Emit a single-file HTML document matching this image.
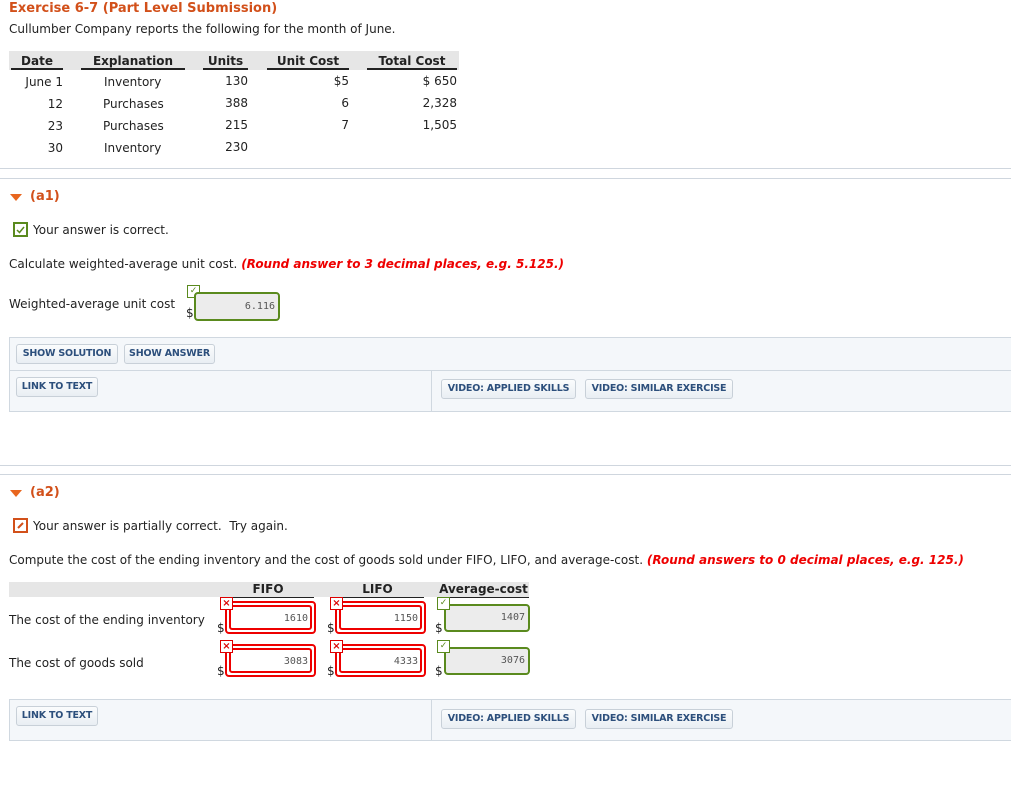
<!DOCTYPE html>
<html><head><meta charset="utf-8"><style>
*{margin:0;padding:0;box-sizing:border-box}
body{width:1011px;height:786px;background:#fff;font-family:"DejaVu Sans","Liberation Sans",sans-serif;font-size:12px;color:#222;position:relative;overflow:hidden}
.a{position:absolute;white-space:nowrap;line-height:14px}
.or{color:#d2501a;font-weight:bold}
.hr{position:absolute;left:0;width:1011px;height:1px;background:#cfd6de}
.th{position:absolute;font-weight:bold;text-align:center;border-bottom:2px solid #222;line-height:15px;height:17px}
.r{text-align:right}
.btn{position:absolute;height:20px;border:1px solid #c8d0d8;border-radius:3px;background:linear-gradient(#fbfcfd,#e9eef3);font-size:9.5px;font-weight:bold;color:#2c4f7c;line-height:18px;text-align:center;white-space:nowrap;overflow:hidden;letter-spacing:-0.2px}
.panel{position:absolute;left:9px;width:1002px;background:#f4f7fa;border:1px solid #d0d8e0;border-right:none}
.chk{position:absolute;width:15px;height:15px;border:2px solid #5a8a1e;background:#fff}
.sm{position:absolute;width:13px;height:13px;border:1px solid #5a8a1e;background:#fff;font-size:9px;color:#5a8a1e;text-align:center;line-height:11px}
.smx{position:absolute;width:13px;height:13px;border:1px solid #d00;background:#fff;font-size:10px;color:#d00;text-align:center;line-height:11px;font-weight:bold}
.gin{position:absolute;border:2px solid #5a8a1e;border-radius:4px;background:#ececec;font-size:10px;color:#555;text-align:right;padding-right:3px;font-family:"DejaVu Sans Mono","Liberation Mono",monospace}
.rin{position:absolute;border:2px solid #e00;border-radius:4px;background:#fff;padding:2px}
.rin div{width:100%;height:100%;border:2px solid #e00;border-radius:3px;background:#fff;font-size:10px;color:#555;text-align:right;padding-right:2px;font-family:"DejaVu Sans Mono","Liberation Mono",monospace;line-height:23px}
.d{position:absolute;font-size:12px}
.tri{position:absolute;width:0;height:0;border-left:6px solid transparent;border-right:6px solid transparent;border-top:7px solid #e8661f}
</style></head><body>
<div class="a or" style="left:9px;top:2px;font-size:13px">Exercise 6-7 (Part Level Submission)</div>
<div class="a" style="left:9px;top:22px">Cullumber Company reports the following for the month of June.</div>

<div style="position:absolute;left:9px;top:51px;width:450px;height:19px;background:#e6e6e6"></div>
<div class="th" style="left:11px;top:53px;width:52px;line-height:17px">Date</div>
<div class="th" style="left:81px;top:53px;width:104px;line-height:17px">Explanation</div>
<div class="th" style="left:203px;top:53px;width:45px;line-height:17px">Units</div>
<div class="th" style="left:267px;top:53px;width:82px;line-height:17px">Unit Cost</div>
<div class="th" style="left:367px;top:53px;width:90px;line-height:17px">Total Cost</div>
<div class="a r" style="left:11px;top:75px;width:52px">June 1</div>
<div class="a" style="left:104px;top:75px">Inventory</div>
<div class="a r" style="left:200px;top:74px;width:48px">130</div>
<div class="a r" style="left:300px;top:74px;width:49px">$5</div>
<div class="a r" style="left:400px;top:74px;width:57px">$ 650</div>
<div class="a r" style="left:11px;top:97px;width:52px">12</div>
<div class="a" style="left:103px;top:97px">Purchases</div>
<div class="a r" style="left:200px;top:96px;width:48px">388</div>
<div class="a r" style="left:300px;top:96px;width:49px">6</div>
<div class="a r" style="left:400px;top:96px;width:57px">2,328</div>
<div class="a r" style="left:11px;top:119px;width:52px">23</div>
<div class="a" style="left:103px;top:119px">Purchases</div>
<div class="a r" style="left:200px;top:118px;width:48px">215</div>
<div class="a r" style="left:300px;top:118px;width:49px">7</div>
<div class="a r" style="left:400px;top:118px;width:57px">1,505</div>
<div class="a r" style="left:11px;top:141px;width:52px">30</div>
<div class="a" style="left:104px;top:141px">Inventory</div>
<div class="a r" style="left:200px;top:140px;width:48px">230</div>

<div class="hr" style="top:168px"></div><div class="hr" style="top:178px"></div>

<div class="tri" style="left:10px;top:194px"></div>
<div class="a or" style="left:30px;top:190px;font-size:13px">(a1)</div>
<div class="chk" style="left:13px;top:222px"><svg width="11" height="11" viewBox="0 0 11 11" style="position:absolute;left:0;top:0"><path d="M2 6l2.5 2.5L9 3" stroke="#5a8a1e" stroke-width="1.5" fill="none"/></svg></div>
<div class="a" style="left:33px;top:223px">Your answer is correct.</div>
<div class="a" style="left:9px;top:257px">Calculate weighted-average unit cost. <span style="color:#e00;font-weight:bold;font-style:italic">(Round answer to 3 decimal places, e.g. 5.125.)</span></div>
<div class="a" style="left:9px;top:297px">Weighted-average unit cost</div>
<div class="sm" style="left:187px;top:285px">✓</div>
<div class="d" style="left:186px;top:306px">$</div>
<div class="gin" style="left:194px;top:292px;width:86px;height:29px;line-height:25px">6.116</div>

<div class="panel" style="top:337px;height:75px"></div>
<div style="position:absolute;left:9px;top:370px;width:1002px;height:1px;background:#d0d8e0"></div>
<div style="position:absolute;left:431px;top:370px;width:1px;height:41px;background:#d0d8e0"></div>
<div class="btn" style="left:16px;top:344px;width:102px">SHOW SOLUTION</div>
<div class="btn" style="left:124px;top:344px;width:91px">SHOW ANSWER</div>
<div class="btn" style="left:16px;top:377px;width:82px">LINK TO TEXT</div>
<div class="btn" style="left:441px;top:379px;width:135px">VIDEO: APPLIED SKILLS</div>
<div class="btn" style="left:585px;top:379px;width:148px">VIDEO: SIMILAR EXERCISE</div>

<div class="hr" style="top:465px"></div><div class="hr" style="top:474px"></div>

<div class="tri" style="left:10px;top:490px"></div>
<div class="a or" style="left:30px;top:486px;font-size:13px">(a2)</div>
<div class="chk" style="left:13px;top:518px;border-color:#d2501a"><svg width="11" height="11" viewBox="0 0 11 11" style="position:absolute;left:0;top:0"><path d="M3 8L8 3" stroke="#d2501a" stroke-width="2" fill="none"/></svg></div>
<div class="a" style="left:33px;top:519px">Your answer is partially correct.&nbsp; Try again.</div>
<div class="a" style="left:9px;top:553px">Compute the cost of the ending inventory and the cost of goods sold under FIFO, LIFO, and average-cost. <span style="color:#e00;font-weight:bold;font-style:italic">(Round answers to 0 decimal places, e.g. 125.)</span></div>

<div style="position:absolute;left:9px;top:582px;width:520px;height:15px;background:#e6e6e6"></div>
<div class="th" style="left:222px;top:581px;width:92px;height:17px;line-height:17px;border-bottom-width:1px">FIFO</div>
<div class="th" style="left:331px;top:581px;width:93px;height:17px;line-height:17px;border-bottom-width:1px">LIFO</div>
<div class="th" style="left:438px;top:581px;width:91px;height:17px;line-height:17px;border-bottom-width:1px">Average-cost</div>

<div class="a" style="left:9px;top:613px">The cost of the ending inventory</div>
<div class="a" style="left:9px;top:656px">The cost of goods sold</div>

<div class="rin" style="left:225px;top:601px;width:91px;height:33px"><div>1610</div></div>
<div class="smx" style="left:220px;top:597px">×</div><div class="d" style="left:217px;top:621px">$</div>
<div class="rin" style="left:335px;top:601px;width:91px;height:33px"><div>1150</div></div>
<div class="smx" style="left:330px;top:597px">×</div><div class="d" style="left:327px;top:621px">$</div>
<div class="gin" style="left:444px;top:604px;width:86px;height:28px;line-height:24px">1407</div>
<div class="sm" style="left:437px;top:597px">✓</div><div class="d" style="left:435px;top:621px">$</div>

<div class="rin" style="left:225px;top:644px;width:91px;height:33px"><div>3083</div></div>
<div class="smx" style="left:220px;top:640px">×</div><div class="d" style="left:217px;top:664px">$</div>
<div class="rin" style="left:335px;top:644px;width:91px;height:33px"><div>4333</div></div>
<div class="smx" style="left:330px;top:640px">×</div><div class="d" style="left:327px;top:664px">$</div>
<div class="gin" style="left:444px;top:647px;width:86px;height:28px;line-height:24px">3076</div>
<div class="sm" style="left:437px;top:640px">✓</div><div class="d" style="left:435px;top:664px">$</div>

<div class="panel" style="top:699px;height:42px"></div>
<div style="position:absolute;left:431px;top:699px;width:1px;height:42px;background:#d0d8e0"></div>
<div class="btn" style="left:16px;top:706px;width:82px">LINK TO TEXT</div>
<div class="btn" style="left:441px;top:709px;width:135px">VIDEO: APPLIED SKILLS</div>
<div class="btn" style="left:585px;top:709px;width:148px">VIDEO: SIMILAR EXERCISE</div>
</body></html>
